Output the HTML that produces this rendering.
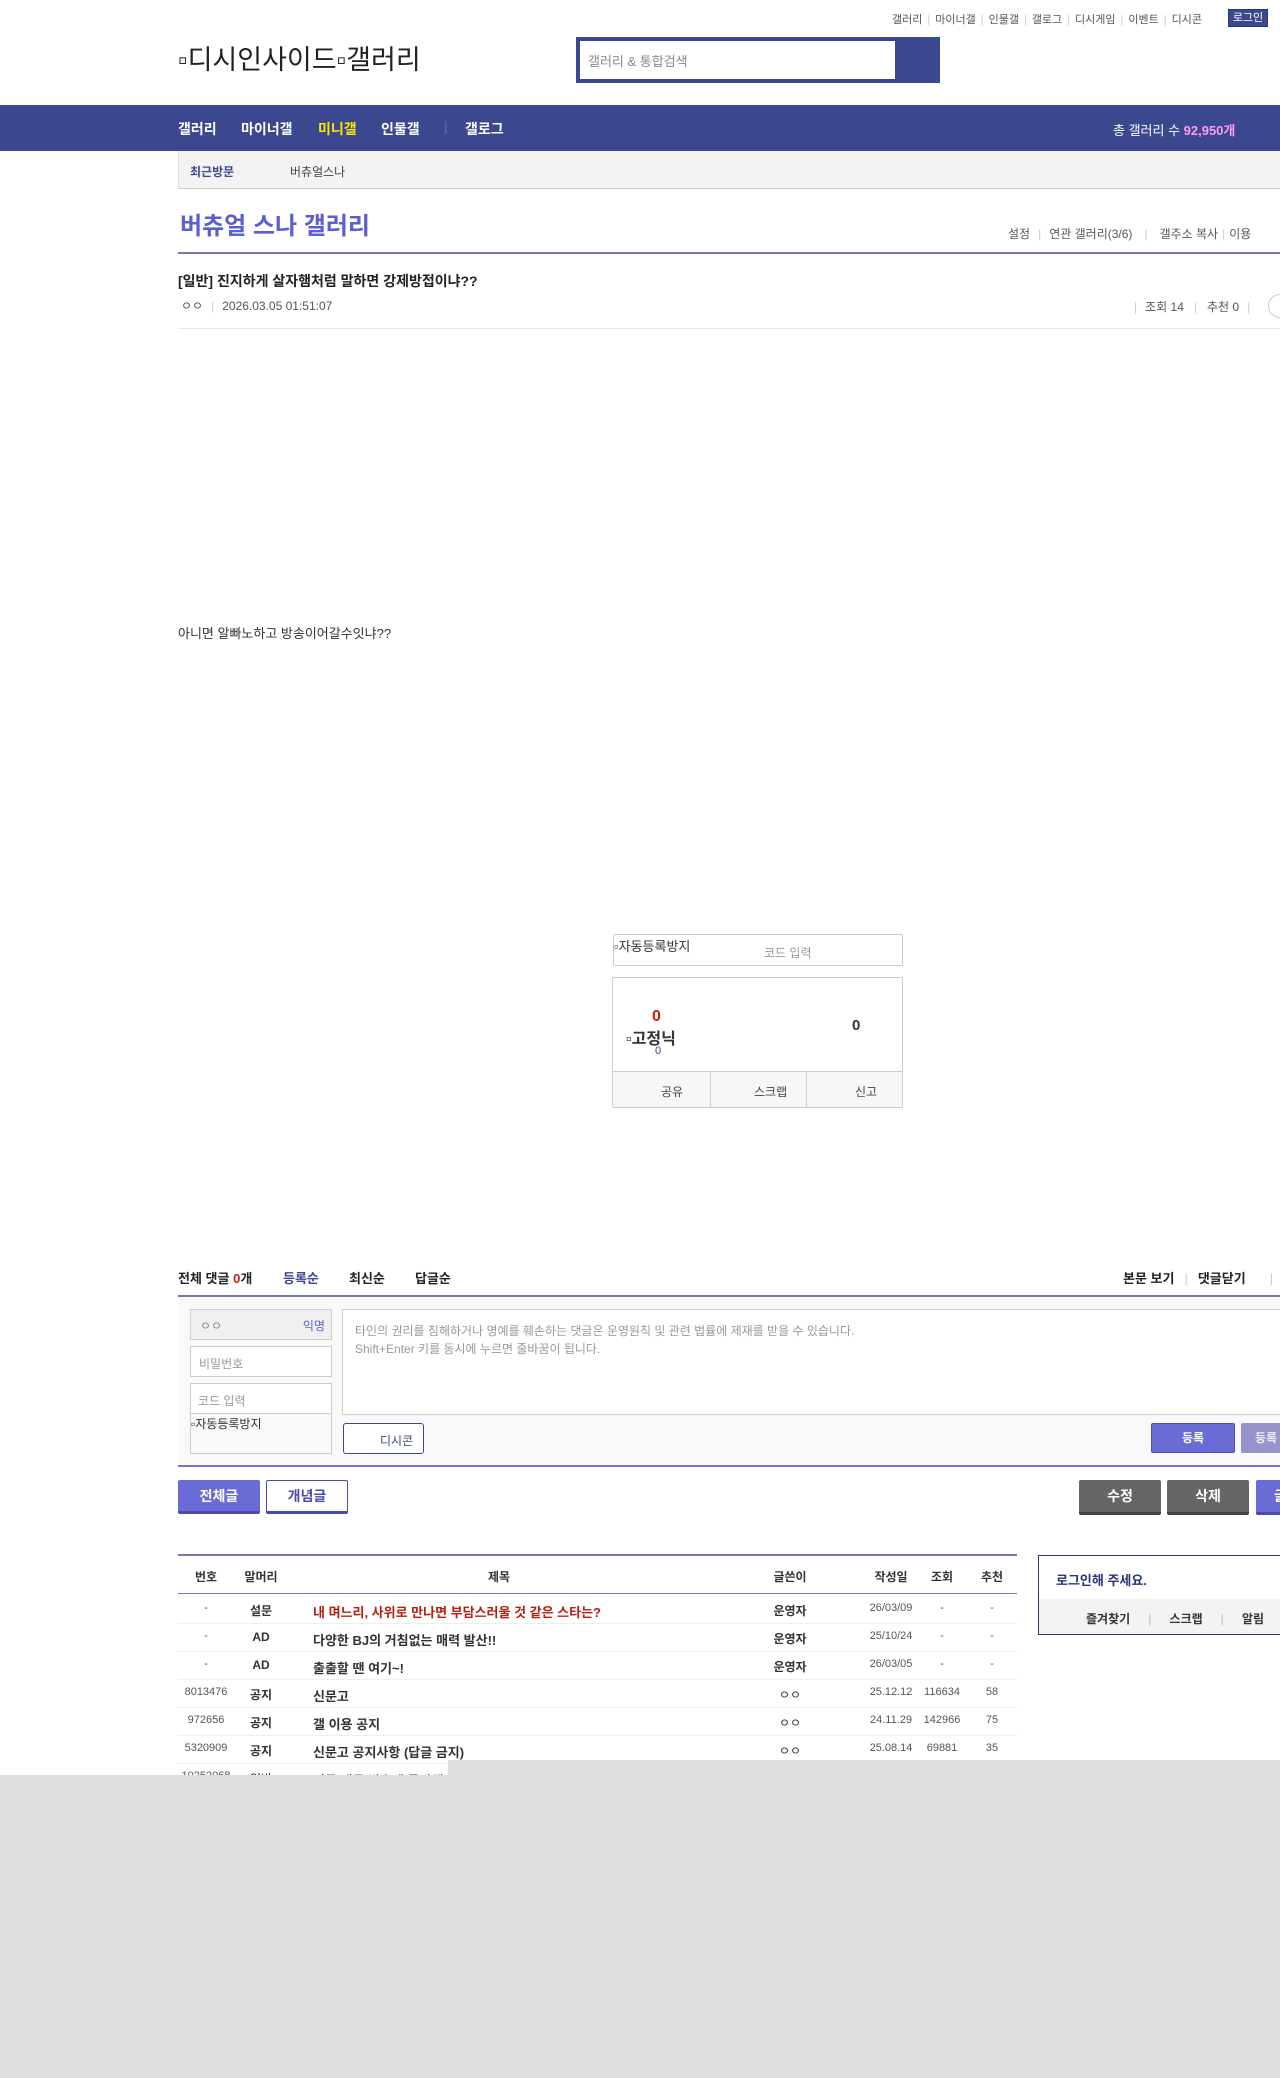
<!DOCTYPE html>
<html><head><meta charset="utf-8"><style>
*{margin:0;padding:0;box-sizing:border-box}
body{width:1280px;height:2078px;position:relative;overflow:hidden;background:#fff;font-family:"Liberation Sans","Noto Sans CJK KR",sans-serif;font-size:12px;color:#333}
.a{position:absolute;white-space:nowrap}
.topl{font-size:11px;color:#555}
.sep{color:#ccc;margin:0 4px}
.topl .sep{margin:0 5px}
.nav span{color:#fff;font-weight:bold;font-size:14px}
.row{position:absolute;left:178px;width:839px;height:28px;border-bottom:1px solid #eee;font-size:12px}
.row div{position:absolute;top:6px;white-space:nowrap}
.c1{left:0;width:56px;text-align:center;font-size:11px;color:#555}
.c2{left:63px;width:40px;text-align:center;font-weight:bold}
.c3{left:135px;font-weight:bold;font-size:13px}
.c4{left:582px;width:60px;text-align:center;font-weight:bold}
.c5{left:690px;width:46px;text-align:center;font-size:11px;color:#555}
.c6{left:742px;width:44px;text-align:center;font-size:11px;color:#555}
.c7{left:792px;width:44px;text-align:center;font-size:11px;color:#555}
.btn{position:absolute;text-align:center;font-weight:bold;font-size:14px;border-radius:2px}
</style></head><body>
<div class="a topl" style="left:892px;top:11px">갤러리<span class="sep">|</span>마이너갤<span class="sep">|</span>인물갤<span class="sep">|</span>갤로그<span class="sep">|</span>디시게임<span class="sep">|</span>이벤트<span class="sep">|</span>디시콘</div>
<div class="a" style="left:1228px;top:9px;width:40px;height:18px;background:#3b4890;border:1px solid #2a3578;color:#fff;font-size:11px;text-align:center;line-height:16px">로그인</div>
<div class="a" style="left:178px;top:38px;font-size:27px;color:#222">▫디시인사이드▫갤러리</div>
<div class="a" style="left:576px;top:37px;width:364px;height:46px;background:#3b4890"></div>
<div class="a" style="left:580px;top:41px;width:315px;height:38px;background:#fff;color:#888;font-size:13px;padding:10px 8px">갤러리 &amp; 통합검색</div>
<div class="a nav" style="left:0;top:105px;width:1280px;height:46px;background:#3b4890">
<span class="a" style="left:178px;top:14px">갤러리</span>
<span class="a" style="left:241px;top:14px">마이너갤</span>
<span class="a" style="left:318px;top:14px;color:#ffe600">미니갤</span>
<span class="a" style="left:381px;top:14px">인물갤</span>
<span class="a" style="left:444px;top:13px;color:#6570b0;font-weight:normal">|</span>
<span class="a" style="left:465px;top:14px">갤로그</span>
<span class="a" style="left:1113px;top:15px;font-weight:normal;font-size:13px">총 갤러리 수 <b style="color:#ff9bf5">92,950개</b></span>
</div>
<div class="a" style="left:178px;top:151px;width:1102px;height:38px;background:#f3f3f3;border-left:1px solid #ddd;border-bottom:1px solid #ccc"></div>
<div class="a" style="left:190px;top:163px;font-size:12px;color:#3b4890;font-weight:bold">최근방문</div>
<div class="a" style="left:290px;top:163px;font-size:12px;color:#444">버츄얼스나</div>
<div class="a" style="left:180px;top:206px;font-size:24px;font-weight:bold;color:#5c5fcf">버츄얼 스나 갤러리</div>
<div class="a" style="left:1008px;top:225px;font-size:12px;color:#555">설정<span class="sep" style="margin:0 8px">|</span>연관 갤러리(3/6)<span class="sep" style="margin:0 12px">|</span>갤주소 복사<span class="sep">|</span>이용</div>
<div class="a" style="left:178px;top:252px;width:1102px;height:2px;background:#7777b8"></div>
<div class="a" style="left:178px;top:271px;font-size:14px;font-weight:bold;color:#222">[일반] 진지하게 살자햄처럼 말하면 강제방접이냐??</div>
<div class="a" style="left:181px;top:297px;font-size:12px;color:#555">ㅇㅇ<span class="sep" style="margin:0 8px">|</span>2026.03.05 01:51:07</div>
<div class="a" style="left:1134px;top:298px;font-size:12px;color:#555"><span class="sep" style="margin:0 8px 0 0">|</span>조회 14<span class="sep" style="margin:0 10px">|</span>추천 0<span class="sep" style="margin:0 8px">|</span></div>
<div class="a" style="left:1268px;top:294px;width:24px;height:24px;border:1px solid #ccc;border-radius:12px"></div>
<div class="a" style="left:178px;top:328px;width:1102px;height:1px;background:#e8e8e8"></div>
<div class="a" style="left:178px;top:623px;font-size:13px;color:#333">아니면 알빠노하고 방송이어갈수잇냐??</div>
<div class="a" style="left:613px;top:934px;width:290px;height:32px;border:1px solid #ccc;border-radius:2px"></div>
<div class="a" style="left:614px;top:936px;font-size:13px;color:#333">▫자동등록방지</div>
<div class="a" style="left:764px;top:944px;font-size:12px;color:#999">코드 입력</div>
<div class="a" style="left:612px;top:977px;width:291px;height:131px;border:1px solid #ccc;border-radius:2px"></div>
<div class="a" style="left:613px;top:1071px;width:289px;height:36px;background:#f7f7f7;border-top:1px solid #ccc"></div>
<div class="a" style="left:710px;top:1071px;width:1px;height:36px;background:#ccc"></div>
<div class="a" style="left:806px;top:1071px;width:1px;height:36px;background:#ccc"></div>
<div class="a" style="left:661px;top:1083px;font-size:12px;color:#444">공유</div>
<div class="a" style="left:754px;top:1083px;font-size:12px;color:#444">스크랩</div>
<div class="a" style="left:855px;top:1083px;font-size:12px;color:#444">신고</div>
<div class="a" style="left:652px;top:1008px;font-size:16px;font-weight:bold;color:#c8200e">0</div>
<div class="a" style="left:626px;top:1025px;font-size:16px;font-weight:bold;color:#333">▫고정닉</div>
<div class="a" style="left:655px;top:1045px;font-size:11px;color:#3b4890">0</div>
<div class="a" style="left:852px;top:1017px;font-size:15px;font-weight:bold;color:#333">0</div>
<div class="a" style="left:178px;top:1268px;font-size:13px;font-weight:bold;color:#222">전체 댓글 <span style="color:#c8200e">0</span>개</div>
<div class="a" style="left:283px;top:1268px;font-size:13px;font-weight:bold;color:#3b4890">등록순</div>
<div class="a" style="left:349px;top:1268px;font-size:13px;font-weight:bold;color:#222">최신순</div>
<div class="a" style="left:415px;top:1268px;font-size:13px;font-weight:bold;color:#222">답글순</div>
<div class="a" style="left:1123px;top:1268px;font-size:13px;font-weight:bold;color:#222">본문 보기<span class="sep" style="margin:0 10px;font-weight:normal">|</span>댓글닫기<span class="sep" style="margin:0 0 0 24px;font-weight:normal">|</span></div>
<div class="a" style="left:178px;top:1295px;width:1102px;height:2px;background:#7777b8"></div>
<div class="a" style="left:178px;top:1297px;width:1102px;height:170px;background:#f9f9f9"></div>
<div class="a" style="left:178px;top:1465px;width:1102px;height:2px;background:#7777b8"></div>
<div class="a" style="left:190px;top:1309px;width:142px;height:31px;border:1px solid #ccc;background:#f0f0f0;font-size:12px;color:#888;padding:7px 9px">ㅇㅇ<span style="position:absolute;right:6px;color:#5c5fcf">익명</span></div>
<div class="a" style="left:190px;top:1346px;width:142px;height:31px;border:1px solid #ccc;background:#fff;font-size:12px;color:#999;padding:8px 8px">비밀번호</div>
<div class="a" style="left:190px;top:1383px;width:142px;height:71px;border:1px solid #ccc;background:#f9f9f9"></div>
<div class="a" style="left:191px;top:1384px;width:140px;height:30px;background:#fff;border-bottom:1px solid #ccc;font-size:12px;color:#999;padding:8px 7px">코드 입력</div>
<div class="a" style="left:191px;top:1415px;font-size:12px;color:#333">▫자동등록방지</div>
<div class="a" style="left:342px;top:1309px;width:960px;height:106px;border:1px solid #ccc;background:#fff;font-size:12px;color:#999;padding:12px 12px;line-height:18px;white-space:normal">타인의 권리를 침해하거나 명예를 훼손하는 댓글은 운영원칙 및 관련 법률에 제재를 받을 수 있습니다.<br>Shift+Enter 키를 동시에 누르면 줄바꿈이 됩니다.</div>
<div class="a" style="left:343px;top:1423px;width:81px;height:31px;border:1px solid #3b4890;border-radius:3px;background:#fff;font-size:12px;color:#3b4890;padding:8px 0 0 36px">디시콘</div>
<div class="btn" style="left:1151px;top:1423px;width:84px;height:30px;background:#6b6bd6;border:1px solid #5050b8;color:#fff;font-size:12px;line-height:28px">등록</div>
<div class="btn" style="left:1241px;top:1423px;width:84px;height:30px;background:#9595cc;color:#eee;font-size:12px;line-height:30px;text-align:left;padding-left:14px">등록</div>
<div class="btn" style="left:178px;top:1480px;width:82px;height:34px;background:#6b6bd6;border-bottom:3px solid #4a4ab0;color:#fff;line-height:32px">전체글</div>
<div class="btn" style="left:266px;top:1480px;width:82px;height:34px;background:#fff;border:1px solid #4a4ab0;border-bottom:3px solid #4a4ab0;color:#4a4ab0;line-height:30px">개념글</div>
<div class="btn" style="left:1079px;top:1480px;width:82px;height:35px;background:#666;border-bottom:3px solid #444;color:#fff;line-height:32px">수정</div>
<div class="btn" style="left:1167px;top:1480px;width:82px;height:35px;background:#666;border-bottom:3px solid #444;color:#fff;line-height:32px">삭제</div>
<div class="btn" style="left:1256px;top:1480px;width:82px;height:35px;background:#6b6bd6;border-bottom:3px solid #4a4ab0;color:#fff;line-height:32px;text-align:left;padding-left:18px">글</div>
<div class="a" style="left:178px;top:1554px;width:839px;height:2px;background:#7777b8"></div>
<div class="a" style="left:178px;top:1593px;width:839px;height:1px;background:#7777b8"></div>
<div class="row" style="top:1566px;border:none;font-weight:bold">
<div class="c1" style="top:2px;font-weight:bold;color:#333;font-size:12px">번호</div><div class="c2" style="top:2px">말머리</div><div style="left:310px;top:2px">제목</div><div class="c4" style="top:2px">글쓴이</div><div class="c5" style="top:2px;font-weight:bold;color:#333;font-size:12px">작성일</div><div class="c6" style="top:2px;font-weight:bold;color:#333;font-size:12px">조회</div><div class="c7" style="top:2px;font-weight:bold;color:#333;font-size:12px">추천</div></div>
<div class="row" style="top:1596px"><div class="c1">-</div><div class="c2">설문</div><div class="c3" style="color:#b5200e">내 며느리, 사위로 만나면 부담스러울 것 같은 스타는?</div><div class="c4">운영자</div><div class="c5">26/03/09</div><div class="c6">-</div><div class="c7">-</div></div>
<div class="row" style="top:1624px"><div class="c1">-</div><div class="c2">AD</div><div class="c3">다양한 BJ의 거침없는 매력 발산!!</div><div class="c4">운영자</div><div class="c5">25/10/24</div><div class="c6">-</div><div class="c7">-</div></div>
<div class="row" style="top:1652px"><div class="c1">-</div><div class="c2">AD</div><div class="c3">출출할 땐 여기~!</div><div class="c4">운영자</div><div class="c5">26/03/05</div><div class="c6">-</div><div class="c7">-</div></div>
<div class="row" style="top:1680px"><div class="c1">8013476</div><div class="c2">공지</div><div class="c3">신문고</div><div class="c4" style="font-weight:normal">ㅇㅇ</div><div class="c5">25.12.12</div><div class="c6">116634</div><div class="c7">58</div></div>
<div class="row" style="top:1708px"><div class="c1">972656</div><div class="c2">공지</div><div class="c3">갤 이용 공지</div><div class="c4" style="font-weight:normal">ㅇㅇ</div><div class="c5">24.11.29</div><div class="c6">142966</div><div class="c7">75</div></div>
<div class="row" style="top:1736px"><div class="c1">5320909</div><div class="c2">공지</div><div class="c3">신문고 공지사항 (답글 금지)</div><div class="c4" style="font-weight:normal">ㅇㅇ</div><div class="c5">25.08.14</div><div class="c6">69881</div><div class="c7">35</div></div>
<div class="row" style="top:1764px;border:none"><div class="c1">10252068</div><div class="c2" style="font-weight:normal">일반</div><div class="c3" style="font-weight:normal">지금 내무 방송에 등반해</div></div>
<div class="a" style="left:1038px;top:1555px;width:260px;height:80px;border:1px solid #2a3578;background:#fff"></div>
<div class="a" style="left:1039px;top:1599px;width:260px;height:35px;background:#f3f3f3"></div>
<div class="a" style="left:1056px;top:1570px;font-size:13px;font-weight:bold;color:#2a3578">로그인해 주세요.</div>
<div class="a" style="left:1086px;top:1610px;font-size:12px;font-weight:bold;color:#333">즐겨찾기<span class="sep" style="margin:0 18px">|</span>스크랩<span class="sep" style="margin:0 18px">|</span>알림</div>
<div class="a" style="left:448px;top:1760px;width:832px;height:20px;background:#dedede"></div>
<div class="a" style="left:0;top:1775px;width:1280px;height:303px;background:#dedede"></div>
</body></html>
